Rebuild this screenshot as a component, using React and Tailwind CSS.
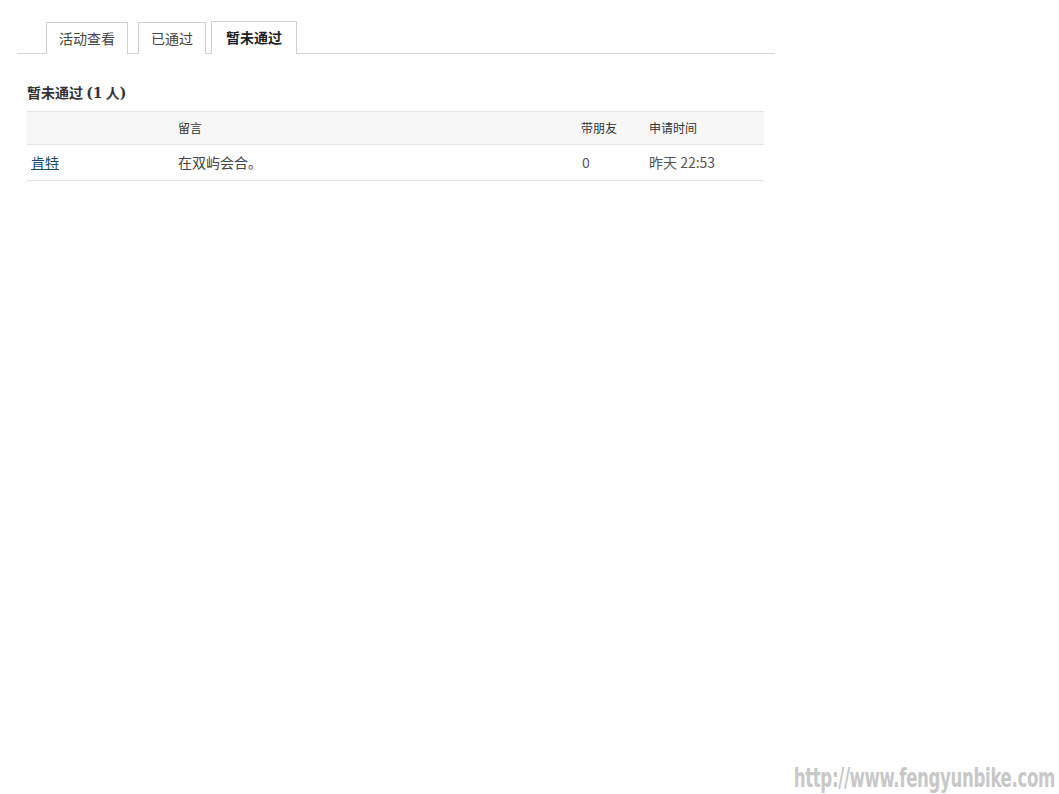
import React from 'react';

const tabs = [
    { label: '活动查看', active: false, w: 'w-[82px]', gap: 'ml-[29px]' },
    { label: '已通过', active: false, w: 'w-[68px]', gap: 'ml-[10px]' },
    { label: '暂未通过', active: true, w: 'w-[86px]', gap: 'ml-[5px]' },
];

export default function App() {
    return (
        <div
            className="relative w-[1059px] h-[794px] bg-white text-[#333] overflow-hidden"
            style={{ fontFamily: '"Noto Sans CJK SC", "DejaVu Sans", sans-serif' }}
        >
            <div className="pt-[22px] pl-[17px] w-[775px]">
                <div className="flex items-end border-b border-[#d4d4d4] h-[32px]">
                    {tabs.map((t) => (
                        <div
                            key={t.label}
                            className={`${t.w} ${t.gap} flex items-center justify-center text-[14px] border border-[#cfcfcf] border-b-0 -mb-px bg-white ${
                                t.active ? 'h-[33px] pb-px font-bold text-[#222]' : 'h-[32px] text-[#444]'
                            }`}
                        >
                            {t.label}
                        </div>
                    ))}
                </div>
            </div>

            <div className="pl-[27px] pt-[26px] w-[764px]">
                <h2 className="text-[14px] font-bold text-[#333] leading-[24px]">
                    暂未通过 <span style={{ fontFamily: '"DejaVu Serif", serif' }}>(1</span> 人<span style={{ fontFamily: '"DejaVu Serif", serif' }}>)</span>
                </h2>
                <table className="mt-[6px] w-[737px] border-collapse text-left">
                    <thead>
                        <tr className="bg-[#f7f7f7] border-t border-b border-[#e3e3e3] h-[33px]">
                            <th className="w-[151px] font-normal"></th>
                            <th className="w-[403px] font-normal text-[12px] text-[#333]">留言</th>
                            <th className="w-[68px] font-normal text-[12px] text-[#333]">带朋友</th>
                            <th className="font-normal text-[12px] text-[#333]">申请时间</th>
                        </tr>
                    </thead>
                    <tbody>
                        <tr className="border-b border-[#e3e3e3] h-[36px] text-[14px]">
                            <td className="pl-[4px]">
                                <a href="#" className="text-[#1a4a6a] underline">肯特</a>
                            </td>
                            <td className="text-[#444]">在双屿会合。</td>
                            <td className="text-[#555] pl-[1px]">0</td>
                            <td className="text-[#555]">昨天 22:53</td>
                        </tr>
                    </tbody>
                </table>
            </div>

            <div
                className="absolute right-[4px] bottom-[3px] text-[26px] font-bold text-[#c8c8c8] tracking-[-0.5px] leading-none origin-right scale-x-[0.71]"
                style={{ fontFamily: '"DejaVu Sans Condensed", "DejaVu Sans", sans-serif' }}
            >
                http://www.fengyunbike.com
            </div>
        </div>
    );
}
